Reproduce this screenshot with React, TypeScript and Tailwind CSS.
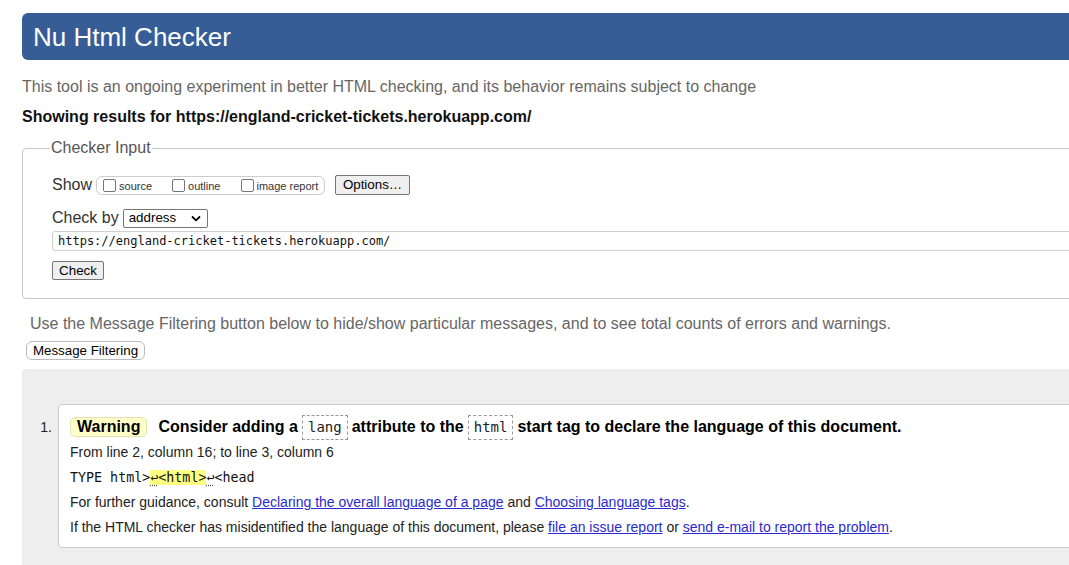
import React from "react";

const Checkbox = () => (
  <span className="inline-block w-[13px] h-[13px] border border-[#767676] rounded-[2px] bg-white" />
);

export default function App() {
  return (
    <div className="w-[1069px] h-[565px] overflow-hidden bg-white font-['Liberation_Sans',Arial,sans-serif] text-[#222]">
      <div className="w-[1140px] pl-[22px] pt-[13px]">
        {/* Header */}
        <div className="h-[47px] rounded-l-[6px] bg-[#365d95] flex items-center pl-[11px]">
          <h1 className="text-[26px] leading-[30px] text-white font-normal">Nu Html Checker</h1>
        </div>

        <p className="mt-[17px] text-[16px] leading-[20px] text-[#666]">
          This tool is an ongoing experiment in better HTML checking, and its behavior remains subject to change
        </p>
        <p className="mt-[10px] text-[16px] leading-[20px] font-bold text-[#111]">
          Showing results for https://england-cricket-tickets.herokuapp.com/
        </p>

        {/* Checker Input fieldset */}
        <fieldset className="mt-[11px] border border-[#c8c8c8] rounded-[4px] pb-[18px]">
          <legend className="ml-[27px] px-[1px] text-[16px] leading-[20px] text-[#555]">Checker Input</legend>
          <div className="pl-[29px]">
            <div className="mt-[17px] flex items-center h-[20px]">
              <span className="text-[16px] leading-[20px] text-[#333]">Show</span>
              <div className="ml-[4px] h-[19px] w-[229px] border border-[#ccc] rounded-[6px] flex items-center pl-[6px] text-[11px] text-[#333]">
                <span className="flex items-center"><Checkbox /><span className="ml-[3px] mt-[2px]">source</span></span>
                <span className="flex items-center ml-[20px]"><Checkbox /><span className="ml-[3px] mt-[2px]">outline</span></span>
                <span className="flex items-center ml-[21px]"><Checkbox /><span className="ml-[2px] mt-[2px]">image report</span></span>
              </div>
              <div className="ml-[10px] h-[20px] w-[75px] border border-[#767676] rounded-[2px] bg-[#efefef] flex items-center justify-center text-[13.33px] text-black">
                Options…
              </div>
            </div>

            <div className="mt-[13px] flex items-center h-[20px]">
              <span className="text-[16px] leading-[20px] text-[#333]">Check by</span>
              <div className="ml-[4px] h-[19px] w-[85px] border border-[#767676] rounded-[2px] bg-white flex items-center pl-[5px] pr-[6px] justify-between text-[13.33px] text-black">
                <span>address</span>
                <svg width="10" height="7" viewBox="0 0 10 7">
                  <path d="M1 1.5 L5 5.3 L9 1.5" fill="none" stroke="#000" strokeWidth="1.8" />
                </svg>
              </div>
            </div>

            <div className="mt-[3px] h-[20px] border border-[#cfcfcf] rounded-[3px] flex items-center pl-[5px] font-['DejaVu_Sans_Mono',monospace] text-[12px] text-[#111]">
              https://england-cricket-tickets.herokuapp.com/
            </div>

            <div className="mt-[10px] h-[19px] w-[52px] border border-[#767676] rounded-[2px] bg-[#efefef] flex items-center justify-center text-[13.33px] text-black">
              Check
            </div>
          </div>
        </fieldset>

        <p className="mt-[15px] ml-[8px] text-[16px] leading-[20px] text-[#666]">
          Use the Message Filtering button below to hide/show particular messages, and to see total counts of errors and warnings.
        </p>
        <div className="mt-[7px] ml-[4px] h-[19px] w-[119px] border border-[#bbb] rounded-[6px] bg-white flex items-center justify-center text-[13.33px] text-black">
          Message Filtering
        </div>

        {/* Results */}
        <div className="mt-[9px] bg-[#eeeeee] rounded-tl-[4px] pt-[35px] pb-[30px] flex">
          <div className="w-[36px] shrink-0 text-right pr-[6px] text-[14px] leading-[26px] pt-[10px] text-[#222]">1.</div>
          <div className="flex-1 bg-white border border-[#cccccc] rounded-l-[4px] pl-[11px] pt-[9px] pb-[7px]">
            <div className="flex items-center h-[26px] text-[16px] font-bold text-black">
              <span className="h-[20px] px-[6px] bg-[#ffffc8] border border-[#e6e2b4] rounded-[5px] flex items-center">Warning</span>
              <span className="ml-[11px]">Consider adding a</span>
              <code className="ml-[4px] h-[25px] px-[5px] border border-dashed border-[#999] flex items-center font-['DejaVu_Sans_Mono',monospace] text-[14px] font-normal text-[#222]">lang</code>
              <span className="ml-[4px]">attribute to the</span>
              <code className="ml-[4px] h-[25px] px-[5px] border border-dashed border-[#999] flex items-center font-['DejaVu_Sans_Mono',monospace] text-[14px] font-normal text-[#222]">html</code>
              <span className="ml-[4px]">start tag to declare the language of this document.</span>
            </div>
            <p className="text-[14px] leading-[25px] text-[#222]">From line 2, column 16; to line 3, column 6</p>
            <p className="text-[13.33px] leading-[25px] font-['DejaVu_Sans_Mono',monospace] text-[#111]">
              TYPE html&gt;
              <span className="bg-[#ffff80]">
                <span className="underline decoration-dotted decoration-[#555] underline-offset-[3px]">↩</span>&lt;html&gt;
              </span>
              <span className="underline decoration-dotted decoration-[#555] underline-offset-[3px]">↩</span>&lt;head
            </p>
            <p className="text-[14px] leading-[25px] text-[#222]">
              For further guidance, consult{" "}
              <a className="text-[#2a2ad0] underline">Declaring the overall language of a page</a> and{" "}
              <a className="text-[#2a2ad0] underline">Choosing language tags</a>.
            </p>
            <p className="text-[14px] leading-[25px] text-[#222]">
              If the HTML checker has misidentified the language of this document, please{" "}
              <a className="text-[#2a2ad0] underline">file an issue report</a> or{" "}
              <a className="text-[#2a2ad0] underline">send e-mail to report the problem</a>.
            </p>
          </div>
        </div>
      </div>
    </div>
  );
}
